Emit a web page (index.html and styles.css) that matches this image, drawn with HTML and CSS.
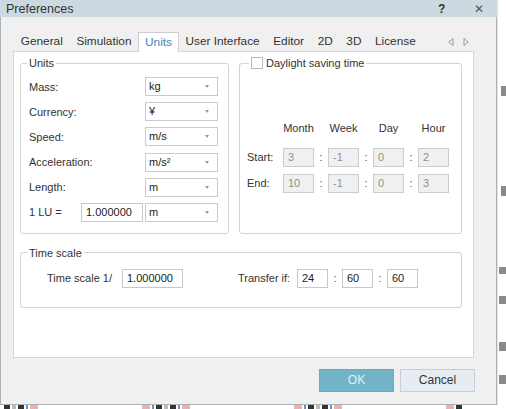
FILE: index.html
```html
<!DOCTYPE html>
<html>
<head>
<meta charset="utf-8">
<title>Preferences</title>
<link rel="stylesheet" href="styles.css">
</head>
<body>
<div class="screen">
  <div class="dialog">
    <div class="titlebar">
      <span class="title">Preferences</span>
      <span class="help">?</span>
      <span class="close">&#x2715;</span>
    </div>
    <div class="tabs">
      <span class="tab">General</span>
      <span class="tab">Simulation</span>
      <span class="tab active">Units</span>
      <span class="tab">User Interface</span>
      <span class="tab">Editor</span>
      <span class="tab">2D</span>
      <span class="tab">3D</span>
      <span class="tab">License</span>
      <span class="tab-arrows">
        <svg width="6" height="8" viewBox="0 0 6 8"><path d="M5 0.5 L0.8 4 L5 7.5 Z" fill="none" stroke="#9a9a9a" stroke-width="1"/></svg>
        <svg width="6" height="8" viewBox="0 0 6 8"><path d="M1 0.5 L5.2 4 L1 7.5 Z" fill="none" stroke="#9a9a9a" stroke-width="1"/></svg>
      </span>
    </div>
    <div class="pane">
      <div class="top-row">
        <fieldset class="group units">
          <legend>Units</legend>
          <div class="unit-rows">
            <div class="row"><span class="lbl">Mass:</span><span class="combo">kg<i class="arrow"></i></span></div>
            <div class="row"><span class="lbl">Currency:</span><span class="combo">¥<i class="arrow"></i></span></div>
            <div class="row"><span class="lbl">Speed:</span><span class="combo">m/s<i class="arrow"></i></span></div>
            <div class="row"><span class="lbl">Acceleration:</span><span class="combo">m/s²<i class="arrow"></i></span></div>
            <div class="row"><span class="lbl">Length:</span><span class="combo">m<i class="arrow"></i></span></div>
            <div class="row"><span class="lbl lu">1 LU =</span><span class="edit lu-edit">1.000000</span><span class="combo">m<i class="arrow"></i></span></div>
          </div>
        </fieldset>
        <fieldset class="group dst">
          <legend><span class="check"></span>Daylight saving time</legend>
          <div class="dst-grid">
            <span></span><span class="hdr">Month</span><span></span><span class="hdr">Week</span><span></span><span class="hdr">Day</span><span></span><span class="hdr">Hour</span>
            <span class="rlbl">Start:</span><span class="field">3</span><span class="colon">:</span><span class="field">-1</span><span class="colon">:</span><span class="field">0</span><span class="colon">:</span><span class="field">2</span>
            <span class="rlbl">End:</span><span class="field">10</span><span class="colon">:</span><span class="field">-1</span><span class="colon">:</span><span class="field">0</span><span class="colon">:</span><span class="field">3</span>
          </div>
        </fieldset>
      </div>
      <fieldset class="group timescale">
        <legend>Time scale</legend>
        <div class="ts-row">
          <span class="ts-lbl">Time scale 1/</span>
          <span class="edit ts-edit">1.000000</span>
          <span class="tr-lbl">Transfer if:</span>
          <span class="edit small">24</span>
          <span class="colon">:</span>
          <span class="edit small">60</span>
          <span class="colon">:</span>
          <span class="edit small">60</span>
        </div>
      </fieldset>
    </div>
    <div class="buttons">
      <span class="btn ok">OK</span>
      <span class="btn cancel">Cancel</span>
    </div>
  </div>
  <div class="side">
    <span class="mark m1"></span>
    <span class="mark m2"></span>
    <span class="mark m3"></span>
    <span class="mark m4"></span>
    <span class="mark m5"></span>
    <span class="mark m6"></span>
  </div>
  <div class="bottom">
    <span class="ic dark"></span><span class="ic gray"></span><span class="ic dark"></span><span class="ic blue"></span><span class="ic red"></span>
    <span class="gapx"></span>
    <span class="ic red"></span><span class="ic blue"></span><span class="ic dark"></span><span class="ic gray"></span><span class="ic dark"></span><span class="ic blue"></span><span class="ic red"></span>
    <span class="gapx"></span>
    <span class="ic red"></span><span class="ic blue"></span><span class="ic dark"></span><span class="ic gray"></span><span class="ic dark"></span><span class="ic blue"></span><span class="ic red"></span>
    <span class="gapx"></span>
    <span class="ic red"></span><span class="ic dark"></span>
  </div>
</div>
</body>
</html>
```

FILE: styles.css
```css
* { box-sizing: border-box; }
html, body { margin: 0; padding: 0; background: #ffffff; }
body {
  font-family: "Liberation Sans", Arial, sans-serif;
  color: #333333;
}
.screen {
  width: 506px;
  height: 409px;
  display: grid;
  grid-template-columns: 497px 9px;
  grid-template-rows: 405px 4px;
  overflow: hidden;
}
.dialog {
  background: #f0f0f0;
  border: 1px solid #a9b2b9;
  display: flex;
  flex-direction: column;
}
.titlebar {
  height: 17px;
  background: #cdd9e1;
  display: flex;
  align-items: center;
  padding-left: 6px;
  font-size: 12.5px;
  color: #333;
  margin: -1px -1px 0 -1px;
}
.title { flex: 1; }
.help { font-weight: bold; width: 12px; margin-right: 24px; font-size: 12px; color: #333; }
.close { font-size: 12px; color: #555; margin-right: 13px; }

.tabs {
  margin-top: 15px;
  height: 19px;
  padding-left: 13px;
  display: flex;
  align-items: flex-start;
  font-size: 11.8px;
}
.tab {
  height: 19px;
  line-height: 19px;
  padding: 0 6.8px;
  color: #333;
}
.tab.active {
  position: relative;
  z-index: 1;
  height: 20px;
  background: #ffffff;
  border: 1px solid #cfcfcf;
  border-bottom: none;
  padding: 0 5.8px;
  line-height: 18px;
  color: #3b88b6;
}
.tab-arrows {
  margin-left: auto;
  margin-right: 27px;
  display: flex;
  gap: 9px;
  padding-top: 6px;
}
.tab-arrows svg { display: block; }

.pane {
  margin-left: 12px;
  width: 461px;
  height: 307px;
  background: #ffffff;
  border: 1px solid #d6d6d6;
  padding: 4px 11px 0 6px;
}
.top-row {
  display: flex;
  gap: 10px;
  align-items: stretch;
}
.group {
  margin: 0;
  padding: 0;
  border: 1px solid #d3d3d3;
  border-radius: 3px;
  min-width: 0;
  font-size: 11px;
}
.group legend {
  font-size: 11px;
  line-height: 14px;
  padding: 0 2px;
  margin-left: 6px;
  color: #333;
}
.units { width: 209px; }
.unit-rows {
  padding: 7px 10px 11px 8px;
  display: flex;
  flex-direction: column;
  gap: 6.2px;
}
.row {
  display: flex;
  align-items: center;
  height: 19px;
}
.lbl { flex: 1; }
.lbl.lu { flex: 0 0 52px; }
.combo {
  position: relative;
  width: 73px;
  height: 19px;
  border: 1px solid #cbcbcb;
  background: #fff;
  line-height: 16px;
  padding-left: 3px;
  font-size: 11px;
  color: #222;
}
.arrow {
  position: absolute;
  right: 8px;
  top: 7px;
  width: 0;
  height: 0;
  border-left: 2.5px solid transparent;
  border-right: 2.5px solid transparent;
  border-top: 3px solid #9a9a9a;
}
.edit {
  height: 19px;
  border: 1px solid #c8c8c8;
  background: #fff;
  line-height: 16px;
  padding-left: 4px;
  font-size: 11px;
  color: #222;
}
.lu-edit { width: 62px; margin-right: 2px; }

.dst { width: 223px; }
.dst legend { margin-left: 9px; display: flex; align-items: center; }
.check {
  display: inline-block;
  width: 12px;
  height: 12px;
  border: 1px solid #b8b8b8;
  background: #fff;
  margin-right: 3px;
}
.dst-grid {
  margin: 51px 0 0 7px;
  display: grid;
  grid-template-columns: 36px 31px 14px 31px 14px 31px 14px 31px;
  grid-template-rows: 14px 32px 26px;
  align-items: end;
}
.dst-grid > span { line-height: 19px; }
.dst-grid .hdr {
  justify-self: center;
  white-space: nowrap;
  width: 40px;
  text-align: center;
  line-height: 14px;
}
.rlbl { color: #333; }
.field {
  height: 19px;
  border: 1px solid #cccccc;
  background: #f0f0f0;
  color: #8f8f8f;
  padding-left: 4px;
}
.dst-grid > .field { line-height: 16px; }
.colon { text-align: center; color: #555; }

.timescale {
  margin-top: 12px;
  width: 442px;
}
.ts-row {
  padding: 9px 0 19px 26px;
  display: flex;
  align-items: center;
}
.ts-row > span { height: 19px; line-height: 19px; }
.ts-row > .edit { line-height: 16px; }
.ts-lbl { width: 75px; }
.ts-edit { width: 61px; }
.tr-lbl { margin-left: 55px; width: 59px; }
.edit.small { width: 31px; }
.ts-row .colon { width: 14px; }

.buttons {
  margin-top: 11px;
  padding-right: 21px;
  display: flex;
  justify-content: flex-end;
  gap: 6px;
}
.btn {
  width: 75px;
  height: 23px;
  line-height: 21px;
  text-align: center;
  font-size: 12px;
}
.btn.ok {
  background: #73b4c9;
  border: 1px solid #6aaac0;
  color: #e4f2f7;
}
.btn.cancel {
  background: #e6ecf1;
  border: 1px solid #c7ced4;
  color: #333;
}

.side {
  position: relative;
  background: #fff;
  border-left: 1px solid #e2e2e2;
}
.mark {
  position: absolute;
  left: 1px;
  width: 8px;
  background: #8a8a8a;
}
.m1 { top: 86px; height: 10px; width: 5px; left: 3px; }
.m2 { top: 186px; height: 10px; width: 5px; left: 3px; }
.m3 { top: 267px; height: 7px; }
.m4 { top: 296px; height: 8px; }
.m5 { top: 342px; height: 9px; }
.m6 { top: 375px; height: 9px; }

.bottom {
  grid-column: 1 / span 2;
  display: flex;
  gap: 2px;
  padding-left: 4px;
  background: #fff;
}
.ic { width: 6px; height: 4px; }
.ic.dark { background: #333; }
.ic.gray { background: #bbb; width: 4px; }
.ic.blue { background: #7a8cc8; width: 2px; }
.ic.red { background: #eab0b0; width: 8px; }
.gapx { width: 100px; }
```
